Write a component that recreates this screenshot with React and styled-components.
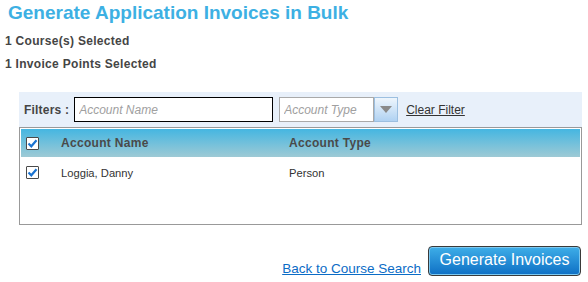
import React from "react";
import styled, { createGlobalStyle } from "styled-components";

const GlobalStyle = createGlobalStyle`
  body {
    margin: 0;
    background: #ffffff;
    font-family: "Liberation Sans", sans-serif;
  }
`;

const Page = styled.div`
  width: 588px;
  height: 282px;
  padding: 0 6px 0 5px;
  box-sizing: border-box;
  font-family: "Liberation Sans", sans-serif;
`;

const Title = styled.h1`
  margin: 0;
  padding-top: 3px;
  padding-left: 3px;
  height: 27px;
  font-size: 19px;
  font-weight: bold;
  color: #3db0e3;
  line-height: 20px;
`;

const Info = styled.div`
  height: 23px;
  line-height: 23px;
  font-size: 12px;
  font-weight: bold;
  letter-spacing: 0.3px;
  color: #454545;
`;

const Panel = styled.div`
  margin: 16px 0 0 14px;
  width: 563px;
`;

const FilterBar = styled.div`
  display: flex;
  align-items: center;
  height: 35px;
  padding-left: 5px;
  background: #e8f0fa;
  font-size: 12px;
`;

const FilterLabel = styled.span`
  font-weight: bold;
  letter-spacing: 0.2px;
  color: #454545;
  margin-right: 5px;
`;

const TextInput = styled.input`
  box-sizing: border-box;
  width: ${(p) => p.$width}px;
  height: 25px;
  border: 1px solid ${(p) => (p.$focused ? "#000" : "#a9a9a9")};
  padding: 0 4px;
  font-family: inherit;
  font-size: 12px;
  outline: none;
  background: #fff;
  &::placeholder {
    color: #a0a0a0;
    font-style: italic;
  }
`;

const Select = styled.div`
  display: flex;
  margin-left: 6px;
  height: 25px;
`;

const DropButton = styled.div`
  box-sizing: border-box;
  width: 24px;
  height: 25px;
  border: 1px solid #9cbfe0;
  background: linear-gradient(#eef5fc, #b0d2f2);
  display: flex;
  align-items: center;
  justify-content: center;
  &::after {
    content: "";
    border-left: 6px solid transparent;
    border-right: 6px solid transparent;
    border-top: 7px solid #8a8a8a;
  }
`;

const LinkText = styled.a`
  color: ${(p) => p.$color};
  text-decoration: underline;
  font-size: ${(p) => p.$size}px;
  margin-left: ${(p) => p.$gap || 0}px;
  cursor: pointer;
`;

const Grid = styled.div`
  box-sizing: border-box;
  height: 98px;
  border: 1px solid #999;
  padding: 1px;
`;

const GridRow = styled.div`
  display: grid;
  grid-template-columns: 40px 228px 1fr;
  align-items: center;
  height: ${(p) => (p.$header ? 28 : 31)}px;
  font-size: ${(p) => (p.$header ? 12 : 11.2)}px;
  font-weight: ${(p) => (p.$header ? "bold" : "normal")};
  letter-spacing: ${(p) => (p.$header ? 0.3 : 0)}px;
  color: ${(p) => (p.$header ? "#4a4a4a" : "#333")};
  background: ${(p) =>
    p.$header ? "linear-gradient(#45b6e1, #9ecad5)" : "transparent"};
`;

const CheckCell = styled.div`
  padding-left: 5px;
  display: flex;
`;

const Box = styled.span`
  box-sizing: border-box;
  width: 13px;
  height: 13px;
  border: 1px solid #4a4a4a;
  border-radius: 1px;
  background: #fff;
  display: flex;
  align-items: center;
  justify-content: center;
`;

const Footer = styled.div`
  display: flex;
  justify-content: flex-end;
  align-items: flex-end;
  gap: 7px;
  margin-top: 21px;
  padding-right: 1px;
`;

const PrimaryButton = styled.button`
  box-sizing: border-box;
  width: 153px;
  height: 30px;
  border: 1px solid #3a3a3a;
  border-radius: 4px;
  background: linear-gradient(#3eaee8, #0e6fc4);
  box-shadow: inset 0 0 0 1px #7cc8f0;
  color: #fff;
  font-family: inherit;
  font-size: 16px;
  padding: 0 0 2px;
`;

const Check = () => (
  <Box>
    <svg width="11" height="11" viewBox="0 0 11 11">
      <path d="M1.5 5.5 L4.3 8.3 L9.5 2.3" fill="none" stroke="#1a73d0" strokeWidth="2.2" />
    </svg>
  </Box>
);

export default function App() {
  return (
    <>
      <GlobalStyle />
      <Page>
        <Title>Generate Application Invoices in Bulk</Title>
        <Info>1 Course(s) Selected</Info>
        <Info>1 Invoice Points Selected</Info>
        <Panel>
          <FilterBar>
            <FilterLabel>Filters :</FilterLabel>
            <TextInput $width={199} $focused placeholder="Account Name" />
            <Select>
              <TextInput $width={95} placeholder="Account Type" />
              <DropButton />
            </Select>
            <LinkText $color="#333" $size={12} $gap={8}>
              Clear Filter
            </LinkText>
          </FilterBar>
          <Grid>
            <GridRow $header>
              <CheckCell>
                <Check />
              </CheckCell>
              <span>Account Name</span>
              <span>Account Type</span>
            </GridRow>
            <GridRow>
              <CheckCell>
                <Check />
              </CheckCell>
              <span>Loggia, Danny</span>
              <span>Person</span>
            </GridRow>
          </Grid>
          <Footer>
            <LinkText $color="#0b6cc6" $size={13.5}>
              Back to Course Search
            </LinkText>
            <PrimaryButton>Generate Invoices</PrimaryButton>
          </Footer>
        </Panel>
      </Page>
    </>
  );
}
